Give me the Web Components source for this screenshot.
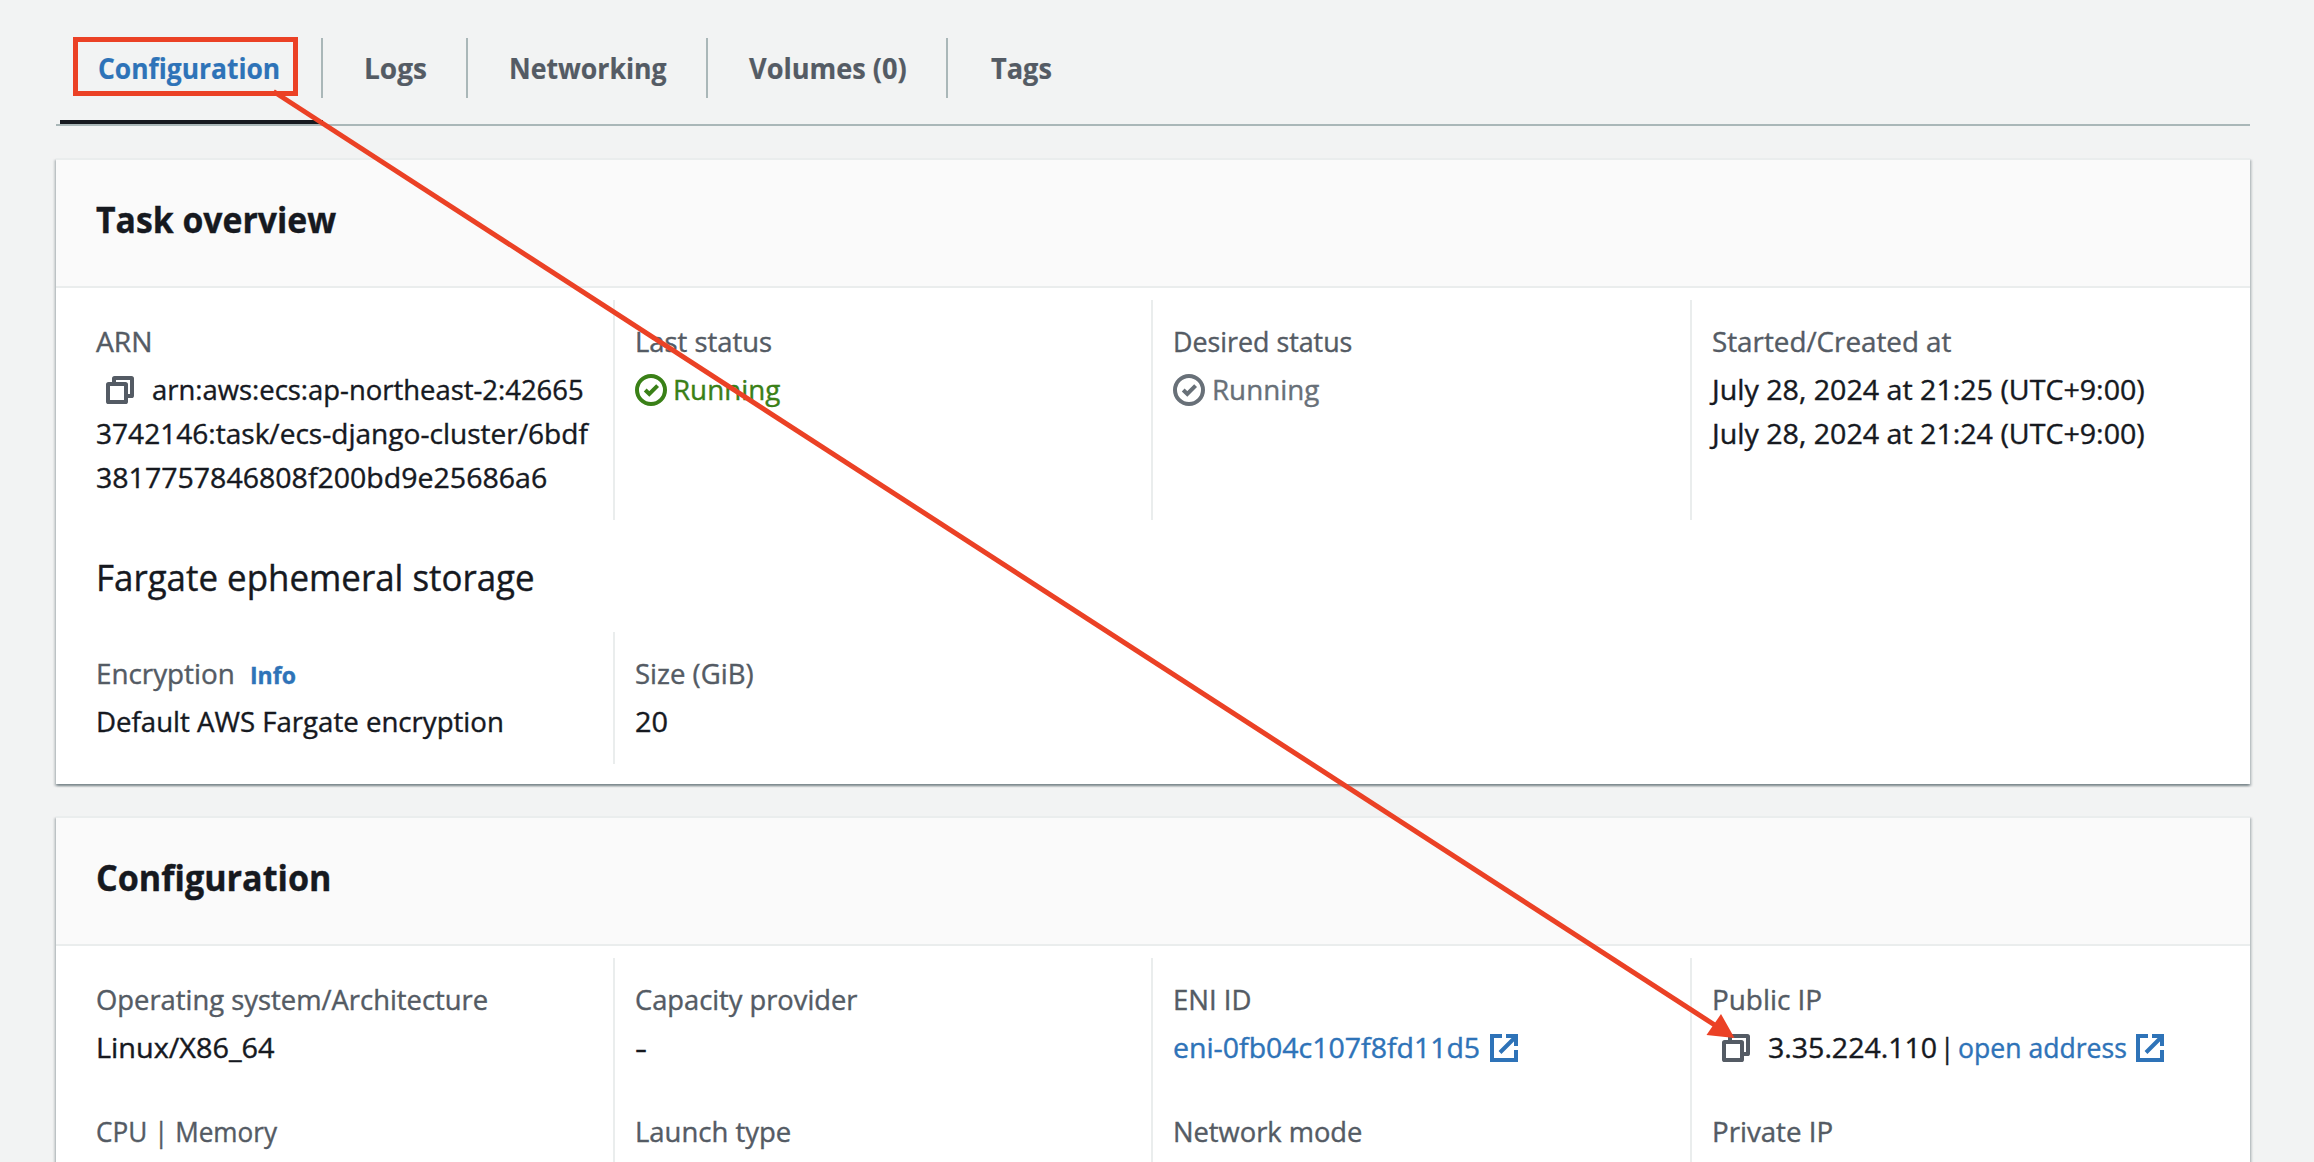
<!DOCTYPE html>
<html lang="en">
<head>
<meta charset="utf-8">
<title>Task configuration</title>
<style>
html,body{margin:0;height:1162px;overflow:hidden;background:#f2f3f3}
body{font-family:"Open Sans","Noto Sans",sans-serif;font-size:28px;font-weight:450;line-height:44px;color:#16191f;-webkit-text-stroke:.4px currentColor}
</style>
</head>
<body>
<task-page></task-page>
<script>
const define=(name,html,setup)=>{
  const t=document.createElement('template');t.innerHTML=html;
  customElements.define(name,class extends HTMLElement{
    connectedCallback(){
      if(this.shadowRoot)return;
      this.attachShadow({mode:'open'}).append(t.content.cloneNode(true));
      if(setup)setup.call(this,this.shadowRoot);
    }
  });
};

/* Condenses its text horizontally to the given width. */
define('fit-text',`<style>:host{display:inline-block;white-space:nowrap;-webkit-text-stroke-color:currentColor}span{display:inline-block;transform-origin:0 50%}</style><span><slot></slot></span>`,function(r){
  const want=+this.getAttribute('w'),s=r.querySelector('span');
  requestAnimationFrame(()=>{
    const natural=s.offsetWidth;
    if(!want||!natural)return;
    s.style.transform='translateY(var(--shift,-1px)) scaleX('+want/natural+')';
    this.style.width=want+'px';
  });
});

const icons={
  copy:'<rect x="2" y="8" width="18" height="18" rx=".6"/><path d="M8 7V2.6Q8 2 8.600 2H25.400Q26 2 26 2.600V19.400Q26 20 25.400 20H21"/>',
  external:'<path d="M12 2H2V26H26V16M16 2H26V12M10 18.500 25.500 3"/>',
  check:'<circle cx="14" cy="14" r="14"/><path d="M8.200 14 12.300 18 20.600 9.700"/>'
};
define('ui-icon',`<style>:host{display:inline-block;width:28px;height:28px;flex:none}
svg{display:block;overflow:visible;fill:none;stroke:currentColor;stroke-width:4}</style><svg viewBox="0 0 28 28" width="28" height="28"></svg>`,function(r){
  r.querySelector('svg').innerHTML=icons[this.getAttribute('name')];
});

define('tab-item',`<style>
:host{display:block;box-sizing:border-box;height:86px;color:#545b64;font-weight:700;-webkit-text-stroke-width:.2px;--shift:0px}
div{display:flex;align-items:center;height:60px;padding:0 39px 0 41px;border-right:2px solid #aab7b8;line-height:60px}
:host([last]) div{border:0;padding-left:42.500px}
:host([active]){color:#2e73b8;margin-left:4px;border-bottom:4px solid #16191f}
:host([active]) div{padding-left:38px;padding-right:41px}
</style><div><slot></slot></div>`);

define('tab-bar',`<style>
:host{display:flex;box-sizing:border-box;height:88px;border-bottom:2px solid #aab7b8}
</style><slot></slot>`);

define('info-card',`<style>
:host{display:block;background:#fff;border-top:2px solid #eaeded;box-shadow:0 2px 2px rgba(0,28,36,.3),2px 2px 2px rgba(0,28,36,.15),-2px 2px 2px rgba(0,28,36,.15);background-clip:padding-box}
header{box-sizing:border-box;height:128px;padding:39px 40px 0;background:#fafafa;border-bottom:2px solid #eaeded;font-size:36px;font-weight:700;line-height:44px}
section{padding:12px 0 20px}
</style><header><slot name="title"></slot></header><section><slot></slot></section>`);

define('column-grid',`<style>
:host{display:grid;grid-template-columns:repeat(4,538.5px);padding-left:18.4px}
</style><slot></slot>`);

define('info-column',`<style>
:host{display:flex;flex-direction:column;gap:40px;box-sizing:border-box;padding:20px 0 20px 19.800px;border-left:2px solid #eaeded}
:host(:first-child){border-color:transparent}
</style><slot></slot>`);

define('info-pair',`<style>
:host{display:block}
.l{color:#545b64;height:44px;margin-bottom:4px}
.v{min-height:44px}
</style><div class="l"><slot name="label"></slot></div><div class="v"><slot></slot></div>`);

define('value-line',`<style>
:host{display:flex;align-items:center;height:44px}
:host([tone=ok]){color:#3a8017}
:host([tone=muted]){color:#687078}
</style><slot></slot>`);

define('sub-heading',`<style>:host{display:block;height:44px;padding:37px 40px 31px;font-size:36px;line-height:44px}</style><slot></slot>`);

define('arrow-overlay',`<style>
:host{position:absolute;left:0;top:0;pointer-events:none}
svg{display:block}
</style><svg width="2314" height="1162" viewBox="0 0 2314 1162"><g fill="none" stroke="#eb4125" stroke-width="5"><rect x="75.500" y="39.500" width="220" height="54"/><path d="M273.500 91.500 1717 1026.500"/></g><path fill="#eb4125" d="M1734.500 1038 1706.500 1035 1721 1014Z"/></svg>`);

define('task-page',`<style>
:host{display:block;position:relative;box-sizing:border-box;width:2314px;height:1162px;overflow:hidden;padding:38px 64px 0 56px}
info-card{margin-top:32px}
.link{color:#2e73b8}
.info{font-size:24px;font-weight:700;color:#2e73b8;margin-left:15px}
ui-icon[name=copy]{color:#545b64;margin:0 18px 0 10px}
ui-icon[name=external]{margin-left:10px}
ui-icon[name=check]{margin:0 8.500px 0 2px}
</style>
<tab-bar>
<tab-item active><fit-text w="182">Configuration</fit-text></tab-item>
<tab-item><fit-text w="63">Logs</fit-text></tab-item>
<tab-item><fit-text w="158">Networking</fit-text></tab-item>
<tab-item><fit-text w="158">Volumes (0)</fit-text></tab-item>
<tab-item last><fit-text w="61">Tags</fit-text></tab-item>
</tab-bar>
<info-card>
<fit-text slot="title" w="240">Task overview</fit-text>
<column-grid>
<info-column><info-pair><fit-text slot="label" w="56.500">ARN</fit-text>
<value-line><ui-icon name="copy"></ui-icon><fit-text w="432">arn:aws:ecs:ap-northeast-2:42665</fit-text></value-line><value-line><fit-text w="492">3742146:task/ecs-django-cluster/6bdf</fit-text></value-line><value-line><fit-text w="451">3817757846808f200bd9e25686a6</fit-text></value-line></info-pair></info-column>
<info-column><info-pair><fit-text slot="label" w="137">Last status</fit-text><value-line tone="ok"><ui-icon name="check"></ui-icon><fit-text w="107">Running</fit-text></value-line></info-pair></info-column>
<info-column><info-pair><fit-text slot="label" w="179">Desired status</fit-text><value-line tone="muted"><ui-icon name="check"></ui-icon><fit-text w="107">Running</fit-text></value-line></info-pair></info-column>
<info-column><info-pair><fit-text slot="label" w="239">Started/Created at</fit-text><value-line><fit-text w="433">July 28, 2024 at 21:25 (UTC+9:00)</fit-text></value-line><value-line><fit-text w="433">July 28, 2024 at 21:24 (UTC+9:00)</fit-text></value-line></info-pair></info-column>
</column-grid>
<sub-heading><fit-text w="439">Fargate ephemeral storage</fit-text></sub-heading>
<column-grid>
<info-column><info-pair><span slot="label"><fit-text w="139">Encryption</fit-text><fit-text class="info" w="46">Info</fit-text></span><value-line><fit-text w="408">Default AWS Fargate encryption</fit-text></value-line></info-pair></info-column>
<info-column><info-pair><fit-text slot="label" w="119">Size (GiB)</fit-text><value-line><fit-text w="33">20</fit-text></value-line></info-pair></info-column>
</column-grid>
</info-card>
<info-card>
<fit-text slot="title" w="235">Configuration</fit-text>
<column-grid>
<info-column><info-pair><fit-text slot="label" w="392">Operating system/Architecture</fit-text><value-line><fit-text w="178">Linux/X86_64</fit-text></value-line></info-pair><info-pair><fit-text slot="label" w="181">CPU | Memory</fit-text></info-pair></info-column>
<info-column><info-pair><fit-text slot="label" w="222">Capacity provider</fit-text><value-line><fit-text w="12">-</fit-text></value-line></info-pair><info-pair><fit-text slot="label" w="156">Launch type</fit-text></info-pair></info-column>
<info-column><info-pair><fit-text slot="label" w="78.500">ENI ID</fit-text><value-line class="link"><fit-text w="307">eni-0fb04c107f8fd11d5</fit-text><ui-icon name="external"></ui-icon></value-line></info-pair><info-pair><fit-text slot="label" w="189">Network mode</fit-text></info-pair></info-column>
<info-column><info-pair><fit-text slot="label" w="110.500">Public IP</fit-text><value-line><ui-icon name="copy"></ui-icon><fit-text w="169">3.35.224.110</fit-text><fit-text style="margin:0 4px 0 3px" w="14">|</fit-text><fit-text class="link" w="169">open address</fit-text><ui-icon class="link" name="external" style="margin-left:9px"></ui-icon></value-line></info-pair><info-pair><fit-text slot="label" w="121.500">Private IP</fit-text></info-pair></info-column>
</column-grid>
</info-card>
<arrow-overlay></arrow-overlay>`);
</script>
</body>
</html>
